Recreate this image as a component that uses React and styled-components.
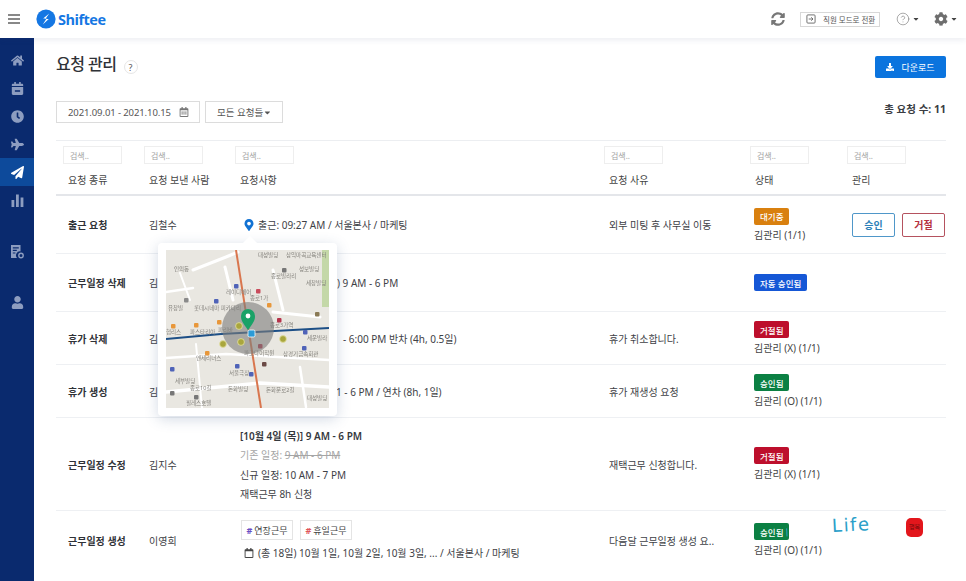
import React from 'react';
import styled, { createGlobalStyle } from 'styled-components';
import {
  FaHome, FaCalendarMinus, FaClock, FaPlane, FaPaperPlane, FaUser, FaCog, FaSyncAlt,
  FaDownload, FaRegCalendarAlt, FaRegCalendar, FaMapMarkerAlt, FaCaretDown,
} from 'react-icons/fa';
import { CircleHelp } from 'lucide-react';

const COLUMNS = '81px 91px 369px 146px 97px 106px';

const searchColumns = ['', '', '', '', '', ''];
const headers = ['요청 종류', '요청 보낸 사람', '요청사항', '요청 사유', '상태', '관리'];

const GlobalStyle = createGlobalStyle`
  html, body {
    margin: 0;
    height: 581px;
    overflow: hidden;
    background: #fff;
    font-family: "Noto Sans", "Noto Sans CJK KR", sans-serif;
    color: #3a3d42;
  }
  * { box-sizing: border-box; }
`;

const ChartIcon = () => (
  <svg width="13" height="13" viewBox="0 0 13 13" fill="currentColor">
    <rect x="0.5" y="6" width="2.8" height="7" />
    <rect x="5" y="0.5" width="2.8" height="12.5" />
    <rect x="9.6" y="3.5" width="2.8" height="9.5" />
  </svg>
);

const ReportIcon = () => (
  <svg width="13" height="14" viewBox="0 0 13 14" fill="currentColor">
    <path d="M0 0h9.5v6.4A4 4 0 0 0 6 13H0zM1.8 2.2v1.2h6V2.2zM1.8 4.8V6h4V4.8zM1.8 7.4v1.2h2.6V7.4z" fillRule="evenodd" />
    <circle cx="10" cy="10.5" r="2.2" fill="none" stroke="currentColor" strokeWidth="1.4" />
  </svg>
);

const LogoIcon = () => (
  <svg width="20" height="20" viewBox="0 0 20 20">
    <circle cx="10" cy="10" r="9.6" fill="#1577e3" />
    <path d="M13.2 4.6 7.2 9.6h3.4l-3.8 5.8 6-5.4H9.4z" fill="#fff" />
  </svg>
);

const EmployeeModeIcon = () => (
  <svg width="10" height="10" viewBox="0 0 11 11" fill="none" stroke="#666" strokeWidth="1">
    <rect x="1" y="1" width="9" height="9" rx="1" />
    <path d="M3 5.5h4.6M5.8 3.6l1.9 1.9-1.9 1.9" />
  </svg>
);

const poi = [
  [20, 50, '#8a8a8a'], [50, 51, '#4f63b8'], [92, 41, '#c94c5c'], [7, 76, '#e8973a'], [30, 75, '#e8973a'],
  [53, 72, '#e8973a'], [103, 55, '#e8973a'], [113, 70, '#b5334a'], [151, 64, '#8a7a55'], [118, 20, '#777'],
  [70, 36, '#4f63b8'], [139, 82, '#4f63b8'], [138, 98, '#4f63b8'], [94, 96, '#b5334a'], [98, 114, '#6b4a45'],
  [41, 103, '#e8973a'], [71, 116, '#4f63b8'], [85, 124, '#4f63b8'], [6, 119, '#4f63b8'], [6, 143, '#777'], [30, 147, '#777'],
];

const mapLabels = [
  [92, 7, '대성빌딩'], [120, 7, '삼익마곡교육센터'], [8, 21, '인의동'], [105, 28, '종로빌라리'], [133, 21, '성보빌딩'],
  [140, 35, '세창빌딩'], [60, 44, '레이디헤어'], [84, 50, '종로1가'], [2, 60, '유창빌'], [28, 60, '롯데시네마 피카디리'],
  [104, 77, '종로3가역'], [24, 84, '파스타리아'], [52, 82, '파리바'], [0, 84, '협리스'], [141, 90, '세운빌라'],
  [78, 105, '파고다어학원'], [117, 106, '삼경기금속회관'], [30, 110, '엔제리너스'], [63, 125, '서울극장'], [9, 133, '세부빌딩'],
  [24, 140, '종로10길'], [62, 141, '돈화빌딩'], [100, 142, '돈화문로2길'], [141, 150, '대성빌딩'], [20, 155, '필레스호텔'],
];

const MapDrawing = () => (
  <svg width="163" height="158" viewBox="0 0 163 158">
    <rect width="163" height="158" fill="#e9e7e1" />
    <rect x="156" y="0" width="7" height="57" fill="#c4d8a8" />
    <g stroke="#fff" fill="none" strokeLinecap="round">
      <path d="M27 20 L60 7 L72 2" strokeWidth="3" />
      <path d="M14 23 L24 50" strokeWidth="2" />
      <path d="M0 42 L27 38" strokeWidth="2.5" />
      <path d="M59 17 L67 50" strokeWidth="3" />
      <path d="M107 20 L117 60" strokeWidth="3" />
      <path d="M107 62 L154 67" strokeWidth="3" />
      <path d="M0 108 L60 104 L163 110" strokeWidth="2.5" />
      <path d="M0 142 L94 133 L163 137" strokeWidth="3.5" />
      <path d="M30 94 L36 158" strokeWidth="2" />
      <path d="M134 117 L140 157" strokeWidth="2.5" />
    </g>
    <path d="M70 0 L95 158" stroke="#d9764e" strokeWidth="2" />
    <path d="M0 89 L55 84 L163 78" stroke="#1d4f86" strokeWidth="2" fill="none" />
    {mapLabels.map(([x, y, label]) => (
      <text key={label + x} x={x} y={y} fontSize="5.5" fill="#85837d">{label}</text>
    ))}
    {poi.map(([x, y, color]) => (
      <rect key={`${x}-${y}`} x={x - 2} y={y - 2} width="4.5" height="4.5" rx="1" fill={color} />
    ))}
    <circle cx="82" cy="78" r="26" fill="#7d7d7b" fillOpacity="0.6" />
    <g fill="#a9a63d" stroke="#e6e3a6" strokeWidth="0.8">
      <circle cx="73" cy="76" r="3.4" />
      <circle cx="57" cy="94" r="3.4" />
      <circle cx="75" cy="92" r="3.4" />
      <circle cx="117" cy="89" r="3.4" />
    </g>
    <rect x="82" y="80" width="7" height="7" rx="1.5" fill="#2b9bd6" stroke="#fff" strokeWidth="0.8" />
    <path d="M82 80 C76 72 75 70 75 66 A7 7 0 0 1 89 66 C89 70 88 72 82 80Z" fill="#1aa267" />
    <circle cx="82" cy="66" r="2.4" fill="#fff" />
  </svg>
);

const App = () => (
  <Page>
    <GlobalStyle />
    <TopBar>
      <Hamburger><span /><span /><span /></Hamburger>
      <Logo>
        <LogoIcon />
        <LogoText>Shiftee</LogoText>
      </Logo>
      <TopActions>
        <RefreshIcon><FaSyncAlt /></RefreshIcon>
        <ModeButton>
          <EmployeeModeIcon />
          직원 모드로 전환
        </ModeButton>
        <TopDropdown $space={16}>
          <CircleHelp size={14} strokeWidth={1} />
          <SmallCaret><FaCaretDown /></SmallCaret>
        </TopDropdown>
        <TopDropdown $space={14}>
          <FaCog />
          <SmallCaret><FaCaretDown /></SmallCaret>
        </TopDropdown>
      </TopActions>
    </TopBar>
    <Body>
      <Sidebar>
        <NavItem><FaHome /></NavItem>
        <NavItem><FaCalendarMinus /></NavItem>
        <NavItem><FaClock /></NavItem>
        <NavItem><FaPlane /></NavItem>
        <NavItem $active><FaPaperPlane /></NavItem>
        <NavItem><ChartIcon /></NavItem>
        <NavItem $space={24}><ReportIcon /></NavItem>
        <NavItem $space={22}><FaUser /></NavItem>
      </Sidebar>
      <Main>
        <TitleRow>
          <TitleGroup>
            <Title>요청 관리</Title>
            <HelpBadge>?</HelpBadge>
          </TitleGroup>
          <DownloadButton>
            <FaDownload />
            다운로드
          </DownloadButton>
        </TitleRow>
        <FilterRow>
          <FilterButton $width={144}>
            <DateText>2021.09.01 - 2021.10.15</DateText>
            <FaRegCalendarAlt color="#777" size={10} />
          </FilterButton>
          <FilterButton $width={78}>
            모든 요청들
            <FaCaretDown color="#555" size={9} />
          </FilterButton>
          <TotalCount>총 요청 수: 11</TotalCount>
        </FilterRow>

        <Table>
          <SearchRow>
            {searchColumns.map((_, index) => (
              <SearchCell key={index}><SearchInput>검색..</SearchInput></SearchCell>
            ))}
          </SearchRow>
          <HeadRow>
            {headers.map((header) => <HeadCell key={header}>{header}</HeadCell>)}
          </HeadRow>

          <Row $height={58}>
            <TypeCell>출근 요청</TypeCell>
            <Cell>김철수</Cell>
            <Cell>
              <CheckIn>
                <PinIcon><FaMapMarkerAlt /></PinIcon>
                출근: 09:27 AM / 서울본사 / 마케팅
              </CheckIn>
            </Cell>
            <Cell>외부 미팅 후 사무실 이동</Cell>
            <StatusCell>
              <Badge $color="#d9800f">대기중</Badge>
              <Approver>김관리 (1/1)</Approver>
            </StatusCell>
            <ActionCell>
              <OutlineButton $color="#4f97c9" $text="#2b7fb8">승인</OutlineButton>
              <OutlineButton $color="#b5525f" $text="#b5303f">거절</OutlineButton>
            </ActionCell>
          </Row>

          <Row $height={58}>
            <TypeCell>근무일정 삭제</TypeCell>
            <Cell>김지수</Cell>
            <DetailCell $pad={97}>) 9 AM - 6 PM</DetailCell>
            <Cell />
            <StatusCell>
              <Badge $color="#1557d6">자동 승인됨</Badge>
            </StatusCell>
            <ActionCell />
          </Row>

          <Row $height={53}>
            <TypeCell>휴가 삭제</TypeCell>
            <Cell>김지수</Cell>
            <DetailCell $pad={103}>- 6:00 PM 반차 (4h, 0.5일)</DetailCell>
            <Cell>휴가 취소합니다.</Cell>
            <StatusCell>
              <Badge $color="#bd0f2c">거절됨</Badge>
              <Approver>김관리 (X) (1/1)</Approver>
            </StatusCell>
            <ActionCell />
          </Row>

          <Row $height={53}>
            <TypeCell>휴가 생성</TypeCell>
            <Cell>김지수</Cell>
            <DetailCell $pad={96}>1 - 6 PM / 연차 (8h, 1일)</DetailCell>
            <Cell>휴가 재생성 요청</Cell>
            <StatusCell>
              <Badge $color="#0b8043">승인됨</Badge>
              <Approver>김관리 (O) (1/1)</Approver>
            </StatusCell>
            <ActionCell />
          </Row>

          <Row $height={93}>
            <TypeCell>근무일정 수정</TypeCell>
            <Cell>김지수</Cell>
            <Cell>
              <ScheduleLines>
                <strong>[10월 4일 (목)] 9 AM - 6 PM</strong>
                <OldSchedule>기존 일정: <s>9 AM - 6 PM</s></OldSchedule>
                <span>신규 일정: 10 AM - 7 PM</span>
                <span>재택근무 8h 신청</span>
              </ScheduleLines>
            </Cell>
            <Cell>재택근무 신청합니다.</Cell>
            <StatusCell>
              <Badge $color="#bd0f2c">거절됨</Badge>
              <Approver>김관리 (X) (1/1)</Approver>
            </StatusCell>
            <ActionCell />
          </Row>

          <Row $height={58} $last>
            <TypeCell>근무일정 생성</TypeCell>
            <Cell>이영희</Cell>
            <Cell>
              <TagRow>
                <Tag><Hash $color="#6a4fc4">#</Hash> 연장근무</Tag>
                <Tag><Hash $color="#e0555a">#</Hash> 휴일근무</Tag>
              </TagRow>
              <DateLine>
                <FaRegCalendar size={10} color="#444" />
                (총 18일) 10월 1일, 10월 2일, 10월 3일, ... / 서울본사 / 마케팅
              </DateLine>
            </Cell>
            <Cell>다음달 근무일정 생성 요..</Cell>
            <StatusCell>
              <Badge $color="#0b8043">승인됨</Badge>
              <Approver>김관리 (O) (1/1)</Approver>
            </StatusCell>
            <ActionCell />
          </Row>
        </Table>
      </Main>
    </Body>

    <MapPopover>
      <MapDrawing />
    </MapPopover>
    <Signature>Life</Signature>
    <Seal>행복</Seal>
  </Page>
);

export default App;

const Page = styled.div`
  position: relative;
  width: 966px;
  height: 581px;
  overflow: hidden;
`;

const TopBar = styled.header`
  position: relative;
  z-index: 2;
  height: 38px;
  display: flex;
  align-items: center;
  padding: 0 8px 0 8px;
  background: #fff;
  box-shadow: 0 2px 6px rgba(40, 60, 110, 0.09);
`;

const Hamburger = styled.div`
  width: 12px;
  display: flex;
  flex-direction: column;
  gap: 2.5px;
  margin-right: 16px;

  span {
    height: 1.5px;
    background: #888;
  }
`;

const Logo = styled.div`
  display: flex;
  align-items: center;
  gap: 2px;
`;

const LogoText = styled.span`
  font-family: "Open Sans", sans-serif;
  font-size: 14.5px;
  font-weight: 700;
  letter-spacing: -0.5px;
  color: #1577e3;
`;

const TopActions = styled.div`
  margin-left: auto;
  display: flex;
  align-items: center;
`;

const RefreshIcon = styled.span`
  display: flex;
  font-size: 14px;
  color: #777;
  margin-right: 15px;
`;

const ModeButton = styled.div`
  width: 80px;
  height: 15px;
  display: flex;
  align-items: center;
  gap: 7px;
  padding-left: 5px;
  font-size: 7.5px;
  color: #555;
  border: 1px solid #d8d8d8;
  white-space: nowrap;
`;

const TopDropdown = styled.div`
  display: flex;
  align-items: center;
  gap: 2px;
  margin-left: ${(p) => p.$space}px;
  font-size: 14px;
  color: #6e6e6e;
`;

const SmallCaret = styled.span`
  display: flex;
  font-size: 8px;
  color: #444;
`;

const Body = styled.div`
  display: flex;
  height: 543px;
`;

const Sidebar = styled.nav`
  width: 34px;
  flex-shrink: 0;
  background: #0a2a6e;
  display: flex;
  flex-direction: column;
  padding-top: 8px;
`;

const NavItem = styled.div`
  height: 28px;
  flex-shrink: 0;
  display: flex;
  align-items: center;
  justify-content: center;
  margin-top: ${(p) => p.$space || 0}px;
  font-size: 13px;
  color: ${(p) => p.$active ? '#fff' : '#8d9dc0'};
  background: ${(p) => p.$active ? '#0d4a9b' : 'transparent'};
`;

const Main = styled.main`
  flex: 1;
  padding: 15px 20px 0 22px;
  min-width: 0;
`;

const TitleRow = styled.div`
  display: flex;
  justify-content: space-between;
  align-items: flex-start;
  height: 48px;
`;

const TitleGroup = styled.div`
  display: flex;
  align-items: center;
  gap: 7px;
`;

const Title = styled.h1`
  margin: 0;
  font-size: 16px;
  line-height: 20px;
  font-weight: 500;
  letter-spacing: -0.5px;
  color: #2f3237;
`;

const HelpBadge = styled.span`
  width: 14px;
  height: 14px;
  margin-top: 7px;
  display: flex;
  align-items: center;
  justify-content: center;
  border: 1px solid #e6e6e6;
  border-radius: 50%;
  font-size: 9px;
  color: #555;
`;

const DownloadButton = styled.button`
  width: 71px;
  height: 22px;
  margin-top: 3px;
  padding: 0;
  display: flex;
  align-items: center;
  justify-content: center;
  gap: 7px;
  border: 0;
  border-radius: 2px;
  background: #0b74de;
  color: #fff;
  font-family: inherit;
  font-size: 9px;

  svg {
    font-size: 8px;
  }
`;

const FilterRow = styled.div`
  display: flex;
  align-items: flex-start;
  gap: 5px;
  height: 39px;
`;

const FilterButton = styled.div`
  width: ${(p) => p.$width}px;
  height: 22px;
  display: flex;
  align-items: center;
  justify-content: space-between;
  padding: 0 10px 0 11px;
  border: 1px solid #dcdcdc;
  font-size: 9.5px;
  color: #555;
  white-space: nowrap;
`;

const DateText = styled.span`
  letter-spacing: -0.1px;
`;

const TotalCount = styled.div`
  margin-left: auto;
  margin-top: 1px;
  font-size: 10.5px;
  line-height: 14px;
  font-weight: 700;
  color: #3a3d42;
`;

const Table = styled.div`
  border-top: 1px solid #eceef1;
`;

const SearchRow = styled.div`
  display: grid;
  grid-template-columns: ${COLUMNS};
  padding-top: 5px;
`;

const SearchCell = styled.div`
  padding-left: 7px;
`;

const SearchInput = styled.div`
  width: 59px;
  height: 18px;
  padding-left: 6px;
  display: flex;
  align-items: center;
  border: 1px solid #eee;
  font-size: 8px;
  color: #a3a3a3;
`;

const HeadRow = styled.div`
  display: grid;
  grid-template-columns: ${COLUMNS};
  height: 32px;
  align-items: center;
  border-bottom: 2px solid #e4e6ea;
`;

const HeadCell = styled.div`
  padding-left: 12px;
  font-size: 10px;
  color: #444;
  white-space: nowrap;
`;

const Row = styled.div`
  display: grid;
  grid-template-columns: ${COLUMNS};
  height: ${(p) => p.$height}px;
  align-items: center;
  border-bottom: ${(p) => p.$last ? 0 : 1}px solid #eef0f3;
`;

const Cell = styled.div`
  padding-left: 12px;
  font-size: 10px;
  color: #3e4146;
  white-space: nowrap;
`;

const TypeCell = styled(Cell)`
  font-weight: 700;
  color: #2f3237;
`;

const DetailCell = styled(Cell)`
  padding-left: ${(p) => p.$pad ? 12 + p.$pad : 12}px;
`;

const CheckIn = styled.div`
  display: flex;
  align-items: center;
  gap: 3px;
  margin-left: 3px;
`;

const PinIcon = styled.span`
  display: flex;
  font-size: 12px;
  color: #1272d3;
`;

const StatusCell = styled(Cell)`
  display: flex;
  flex-direction: column;
  align-items: flex-start;
  gap: 4px;
  padding-left: 11px;
`;

const Badge = styled.span`
  height: 17px;
  padding: 0 6px;
  display: flex;
  align-items: center;
  border-radius: 2px;
  background: ${(p) => p.$color};
  color: #fff;
  font-size: 8.5px;
  font-weight: 500;
`;

const Approver = styled.span`
  font-size: 10px;
  line-height: 13px;
  color: #444;
`;

const ActionCell = styled.div`
  display: flex;
  gap: 7px;
  padding-left: 12px;
`;

const OutlineButton = styled.button`
  width: 43px;
  height: 24px;
  padding: 0;
  border: 1px solid ${(p) => p.$color};
  border-radius: 2px;
  background: #fff;
  color: ${(p) => p.$text};
  font-family: inherit;
  font-size: 10px;
  font-weight: 600;
`;

const ScheduleLines = styled.div`
  display: flex;
  flex-direction: column;
  padding-top: 3px;
  line-height: 19.3px;

  strong {
    font-weight: 600;
    color: #35383d;
  }
`;

const OldSchedule = styled.span`
  color: #a5a5a5;
`;

const TagRow = styled.div`
  display: flex;
  gap: 7px;
  margin: 0 0 5px 1px;
`;

const Tag = styled.span`
  width: 52px;
  height: 20px;
  display: flex;
  align-items: center;
  justify-content: center;
  gap: 2px;
  border: 1px solid #e4e4e4;
  font-size: 9px;
  color: #444;
`;

const Hash = styled.span`
  font-weight: 700;
  color: ${(p) => p.$color};
`;

const DateLine = styled.div`
  display: flex;
  align-items: center;
  gap: 4px;
  margin-left: 4px;
`;

const MapPopover = styled.div`
  position: absolute;
  left: 158px;
  top: 243px;
  width: 179px;
  height: 173px;
  padding: 7px 8px;
  display: flex;
  background: #fff;
  border-radius: 4px;
  box-shadow: 0 3px 14px rgba(50, 80, 130, 0.22);

  &::before {
    content: '';
    position: absolute;
    left: 87px;
    top: -5px;
    width: 10px;
    height: 10px;
    background: #fff;
    transform: rotate(45deg);
  }

  svg {
    position: relative;
    filter: blur(0.35px);
  }
`;

const Signature = styled.span`
  position: absolute;
  left: 832px;
  top: 514px;
  font-family: "DejaVu Sans", sans-serif;
  font-size: 18px;
  letter-spacing: 1.5px;
  color: #2c9fc9;
  transform: rotate(-3deg);

  &::before {
    content: '';
    position: absolute;
    left: -46px;
    top: 11px;
    width: 1px;
    height: 8px;
    background: #2c9fc9;
  }
`;

const Seal = styled.span`
  position: absolute;
  left: 906px;
  top: 518px;
  width: 17px;
  height: 19px;
  display: flex;
  align-items: center;
  justify-content: center;
  border-radius: 5px;
  background: #e3161c;
  color: #6b0a0a;
  font-size: 6px;
  line-height: 7px;
`;
